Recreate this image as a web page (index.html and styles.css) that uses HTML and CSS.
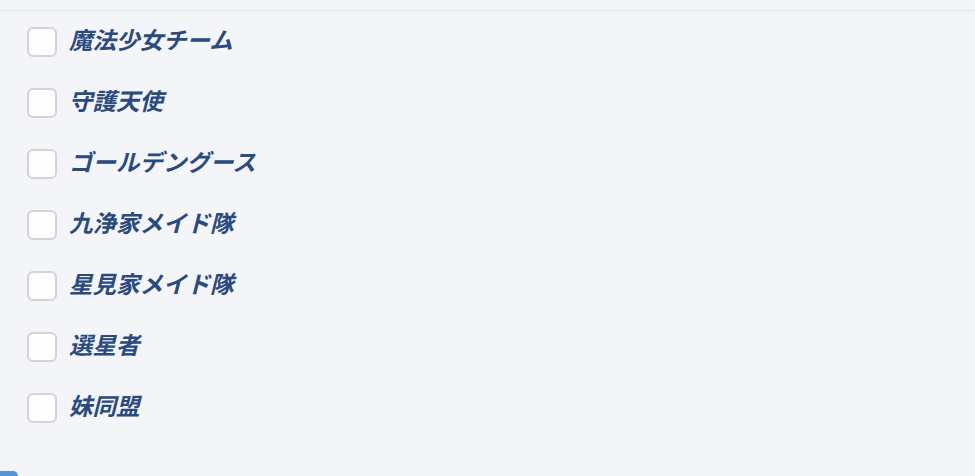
FILE: index.html
```html
<!DOCTYPE html>
<html lang="ja">
<head>
<meta charset="utf-8">
<link rel="stylesheet" href="styles.css">
</head>
<body>
<div class="topbar"></div>
<ul class="list">
  <li class="row"><span class="box"></span><span class="label">魔法少女チーム</span></li>
  <li class="row"><span class="box"></span><span class="label">守護天使</span></li>
  <li class="row"><span class="box"></span><span class="label">ゴールデングース</span></li>
  <li class="row"><span class="box"></span><span class="label">九浄家メイド隊</span></li>
  <li class="row"><span class="box"></span><span class="label">星見家メイド隊</span></li>
  <li class="row"><span class="box"></span><span class="label">選星者</span></li>
  <li class="row"><span class="box"></span><span class="label">妹同盟</span></li>
</ul>
<div class="footer"><span class="btn"></span></div>
</body>
</html>
```

FILE: styles.css
```css
html, body {
  margin: 0;
  padding: 0;
  background: #f3f5f9;
  height: 476px;
  overflow: hidden;
}
.topbar {
  height: 10px;
  border-bottom: 1px solid #e4e7eb;
}
.list {
  list-style: none;
  margin: 0;
  padding: 0 0 0 27px;
}
.row {
  height: 61px;
  display: flex;
  align-items: center;
  gap: 12px;
}
.box {
  width: 26px;
  height: 26px;
  border: 2px solid #d2d3d6;
  border-radius: 6px;
  background: #fdfdfe;
  flex: none;
}
.label {
  font-family: "Noto Sans CJK JP", "Noto Sans", sans-serif;
  font-size: 23.5px;
  font-weight: 700;
  font-style: italic;
  color: #2b4a7d;
  line-height: 1;
  padding-bottom: 3px;
}
.footer {
  padding-top: 33px;
}
.btn {
  display: block;
  width: 18px;
  height: 10px;
  background: #5a95d3;
  border-top-right-radius: 5px;
}
```
